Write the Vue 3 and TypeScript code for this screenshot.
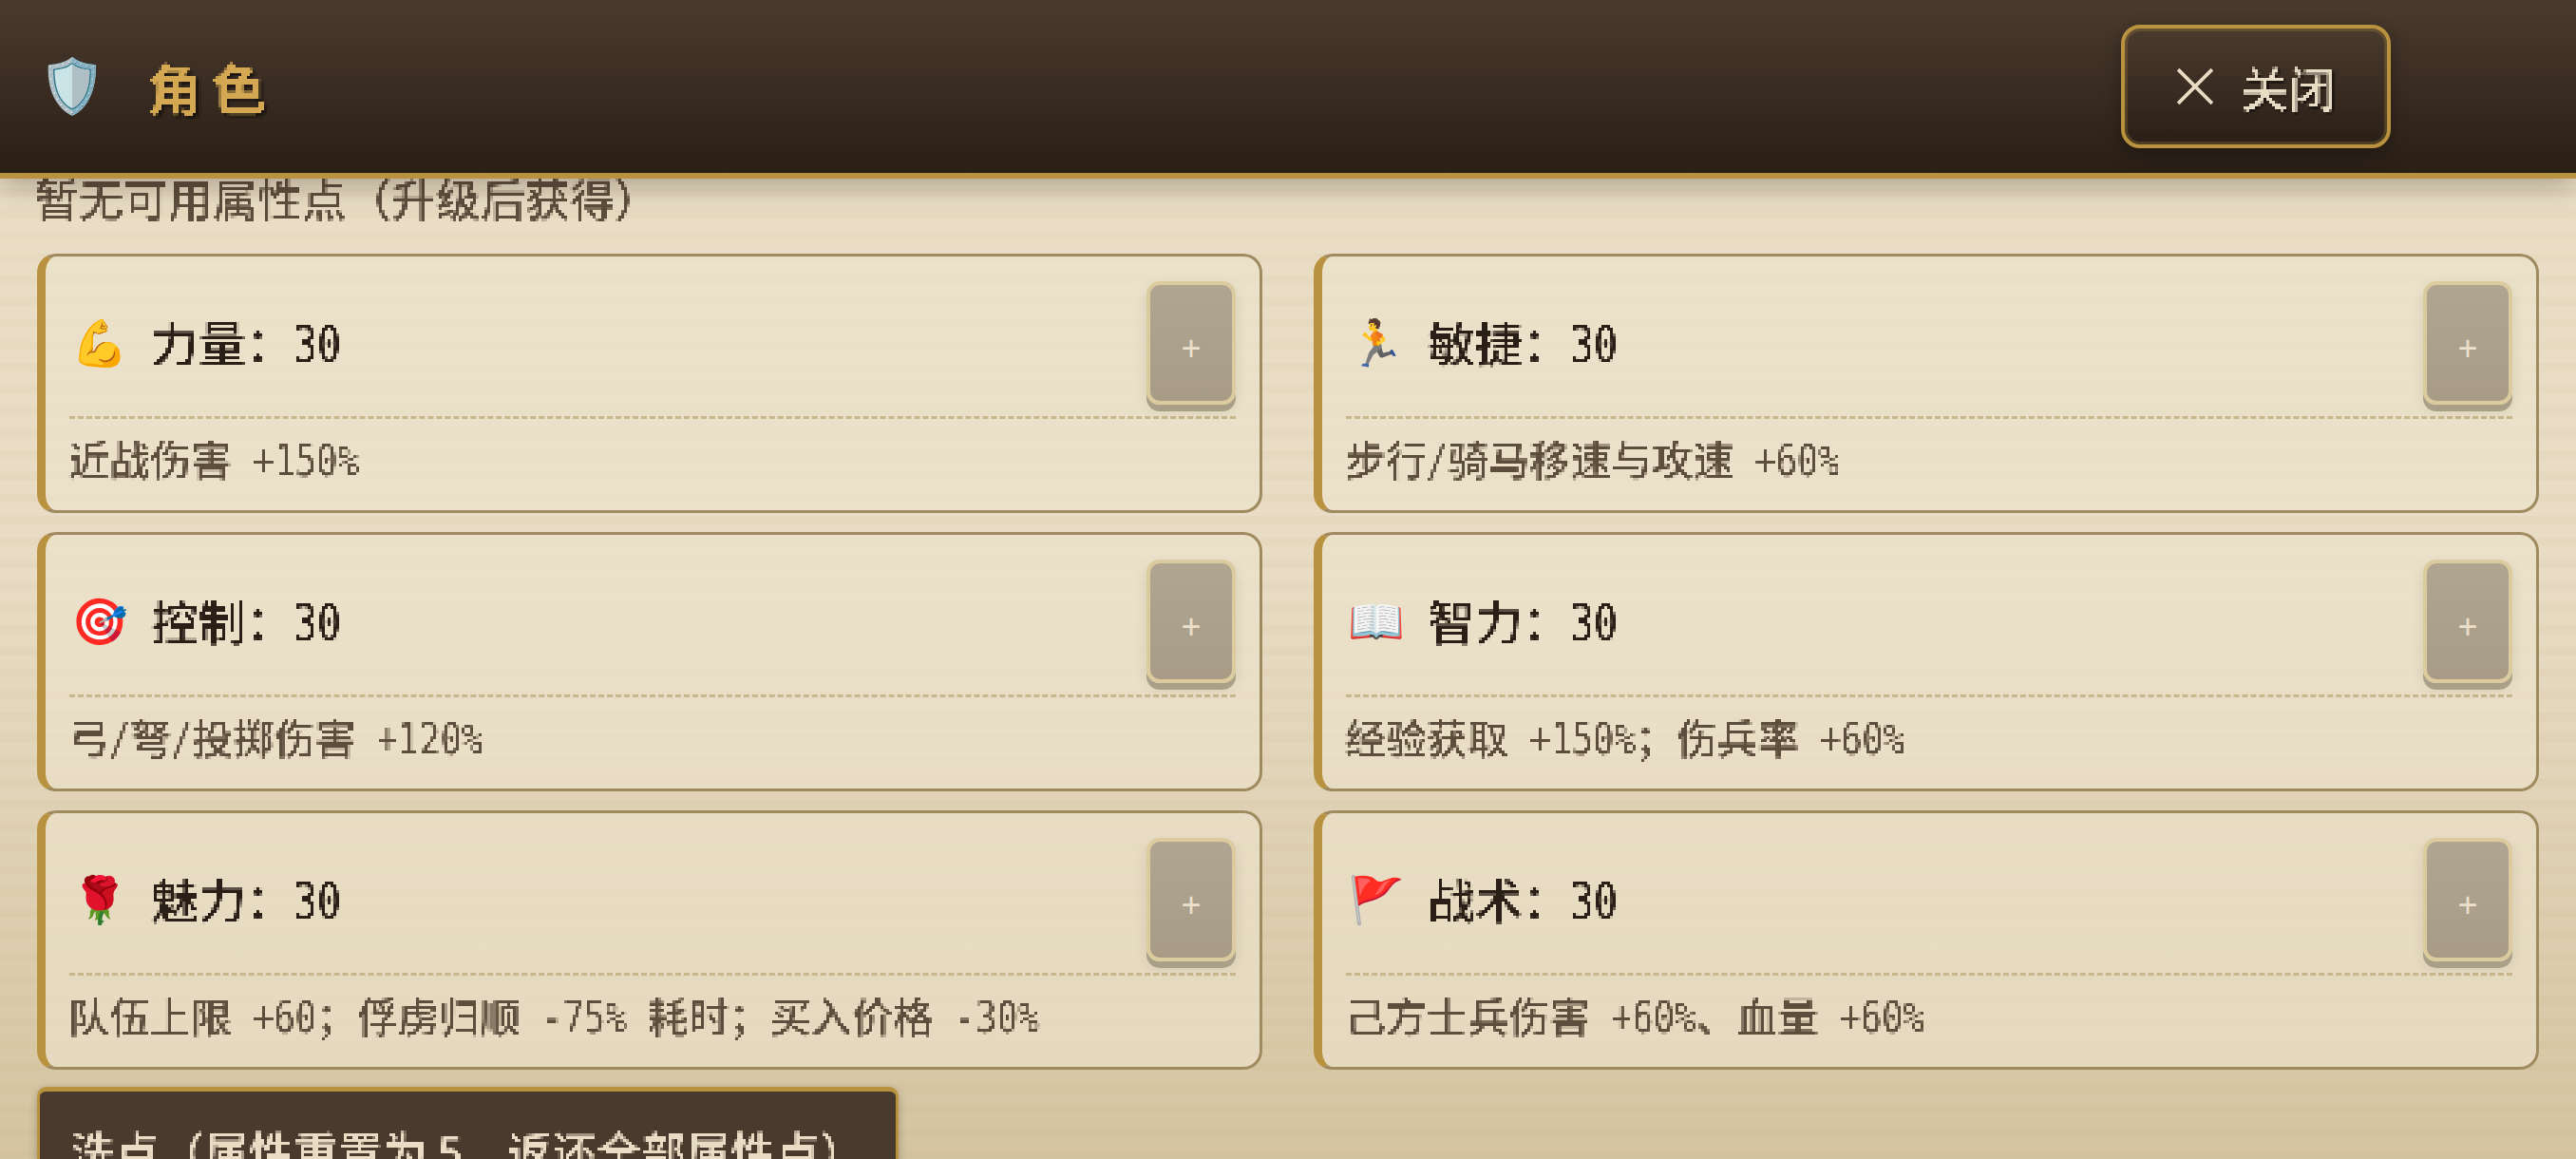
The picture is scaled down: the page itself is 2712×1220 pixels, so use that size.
<script setup lang="ts">
interface Attr { icon: string; name: string; value: number; desc: string }

const attrs: Attr[] = [
  { icon: '💪', name: '力量', value: 30, desc: '近战伤害 +150%' },
  { icon: '🏃', name: '敏捷', value: 30, desc: '步行/骑马移速与攻速 +60%' },
  { icon: '🎯', name: '控制', value: 30, desc: '弓/弩/投掷伤害 +120%' },
  { icon: '📖', name: '智力', value: 30, desc: '经验获取 +150%；伤兵率 +60%' },
  { icon: '🌹', name: '魅力', value: 30, desc: '队伍上限 +60；俘虏归顺 -75% 耗时；买入价格 -30%' },
  { icon: '🚩', name: '战术', value: 30, desc: '己方士兵伤害 +60%、血量 +60%' },
]

function parts(text: string) {
  return text.split(/([\x20-\x7e]+)/).filter(Boolean).map((t) => ({ t, latin: /^[\x20-\x7e]+$/.test(t) }))
}
</script>

<template>
  <svg class="defs" aria-hidden="true">
    <filter id="px" x="0" y="0" width="100%" height="100%" color-interpolation-filters="sRGB">
      <feFlood x="1" y="1" width="1" height="1" flood-color="#000" />
      <feComposite width="3" height="3" />
      <feTile result="grid" />
      <feComposite in="SourceGraphic" in2="grid" operator="in" />
      <feMorphology operator="dilate" radius="1" />
    </filter>
  </svg>
  <div class="page">
    <header class="bar">
      <span class="shield">🛡️</span>
      <h1 class="title"><span class="px">角色</span></h1>
      <button class="close">
        <svg class="x" viewBox="0 0 38 38" width="40" height="40">
          <path d="M2 2 L36 36 M36 2 L2 36" fill="none" stroke="#e8dcc4" stroke-width="3.5" />
        </svg>
        <span class="px">关闭</span>
      </button>
    </header>
    <main class="body">
      <p class="hint"><span class="px">暂无可用属性点（升级后获得）</span></p>
      <section class="grid">
        <article v-for="a in attrs" :key="a.name" class="card">
          <div class="row">
            <span class="emoji">{{ a.icon }}</span>
            <span class="label px">{{ a.name }}：<span class="num">{{ a.value }}</span></span>
            <button class="plus" disabled>+</button>
          </div>
          <p class="desc"><span class="px"><template v-for="(p, i) in parts(a.desc)" :key="i"><span v-if="p.latin" class="latin">{{ p.t }}</span><template v-else>{{ p.t }}</template></template></span></p>
        </article>
      </section>
      <button class="reset"><span class="px">洗点（属性重置为 5，返还全部属性点）</span></button>
    </main>
  </div>
</template>

<style>
html, body { margin: 0; overflow: hidden; background: #e8dcc4; }
</style>

<style scoped>
.defs { display: block; width: 0; height: 0; }
.page {
  width: 2712px;
  height: 1220px;
  overflow: hidden;
  display: flex;
  flex-direction: column;
  font-family: "Noto Sans CJK SC", sans-serif;
  background:
    repeating-linear-gradient(180deg, rgba(190,165,115,0) 0 14px, rgba(190,165,115,.07) 14px 23px),
    linear-gradient(180deg, #eadfc6 0%, #e8dcc4 50%, #d4c4a0 100%);
}
.px { display: inline-block; filter: url(#px); }
.bar {
  flex: none;
  height: 182px;
  border-bottom: 6px solid #b8923f;
  background: linear-gradient(180deg, #4a3a2e 0%, #2a1f16 100%);
  box-shadow: 0 6px 30px rgba(42, 31, 22, .35);
  display: flex;
  align-items: center;
  padding: 0 195px 0 41px;
  position: relative;
  z-index: 1;
}
.shield {
  font-size: 56px;
  line-height: 1;
  font-family: "Noto Color Emoji", sans-serif;
  margin-right: 44px;
}
.title {
  margin: 0;
  font-size: 58px;
  line-height: 70px;
  font-weight: 700;
  letter-spacing: 10px;
  color: #d4a853;
  text-shadow: 3px 3px 3px rgba(0, 0, 0, .5);
}
.close {
  margin-left: auto;
  width: 284px;
  height: 130px;
  box-sizing: border-box;
  border: 4px solid #b8923f;
  border-radius: 20px;
  background: linear-gradient(180deg, #4a3a2e 0%, #2a1f16 100%);
  box-shadow: inset 0 0 0 3px rgba(184, 146, 63, .25), 0 6px 18px rgba(0, 0, 0, .3);
  color: #e8dcc4;
  font-family: inherit;
  font-size: 50px;
  font-weight: 500;
  line-height: 60px;
  display: flex;
  align-items: center;
  justify-content: center;
  gap: 28px;
  padding: 0;
  text-shadow: 2px 2px 2px rgba(0, 0, 0, .5);
}
.body {
  flex: 1;
  min-height: 0;
  padding: 0 39px;
}
.hint {
  margin: -3px 0 36px -3px;
  height: 46px;
  font-size: 47px;
  font-weight: 500;
  line-height: 46px;
  color: #5c4d3c;
  white-space: nowrap;
}
.grid {
  display: grid;
  grid-template-columns: 1290px 1290px;
  column-gap: 54px;
  row-gap: 20px;
}
.card {
  box-sizing: border-box;
  height: 273px;
  border: 3px solid #a08a60;
  border-left: 9px solid #b8923f;
  border-radius: 20px;
  background: rgba(236, 227, 204, .65);
  padding: 26px 25px 0;
}
.row {
  display: flex;
  align-items: flex-start;
  height: 142px;
  border-bottom: 3px dashed #c8b68c;
}
.emoji {
  width: 86px;
  flex: none;
  margin-top: 35px;
  padding-left: 2px;
  box-sizing: border-box;
  font-family: "Noto Color Emoji", sans-serif;
  font-size: 48px;
  line-height: 62px;
}
.label {
  margin-top: 31px;
  font-size: 50px;
  font-weight: 500;
  line-height: 64px;
  color: #2a1f16;
  white-space: nowrap;
}
.num {
  display: inline-block;
  font-family: "DejaVu Sans Mono", monospace;
  font-size: 41.5px;
  font-weight: 400;
  transform: scaleY(1.27);
  transform-origin: 50% 72%;
}
.plus {
  margin-left: auto;
  width: 94px;
  height: 130px;
  box-sizing: border-box;
  padding: 12px 0 0;
  border: 4px solid #dccb9f;
  border-radius: 14px;
  background: linear-gradient(180deg, #b0a591 0%, #a89c86 100%);
  box-shadow: 0 7px 0 #aa9f87, 0 6px 14px rgba(42, 31, 22, .1);
  color: #ebe0cc;
  font-family: "Liberation Sans", sans-serif;
  font-size: 36px;
  line-height: 1;
}
.desc {
  margin: 0 0 0 -1px;
  height: 89px;
  display: flex;
  align-items: center;
  font-size: 43px;
  font-weight: 500;
  line-height: 54px;
  color: #5c4d3c;
  white-space: nowrap;
}
.latin {
  display: inline-block;
  white-space: pre;
  font-family: "DejaVu Sans Mono", monospace;
  font-size: 37px;
  font-weight: 400;
  transform: scaleY(1.24);
  transform-origin: 50% 72%;
}
.reset {
  display: block;
  box-sizing: border-box;
  width: 907px;
  height: 120px;
  margin-top: 18px;
  padding: 12px 0 0 32px;
  text-align: left;
  border: 3px solid #b8923f;
  border-top-width: 5px;
  border-radius: 10px;
  background: #4a3a2e;
  box-shadow: 0 3px 8px rgba(42, 31, 22, .3);
  color: #e8dcc4;
  font-family: inherit;
  font-size: 47px;
  font-weight: 500;
  line-height: 60px;
  white-space: nowrap;
}
</style>
